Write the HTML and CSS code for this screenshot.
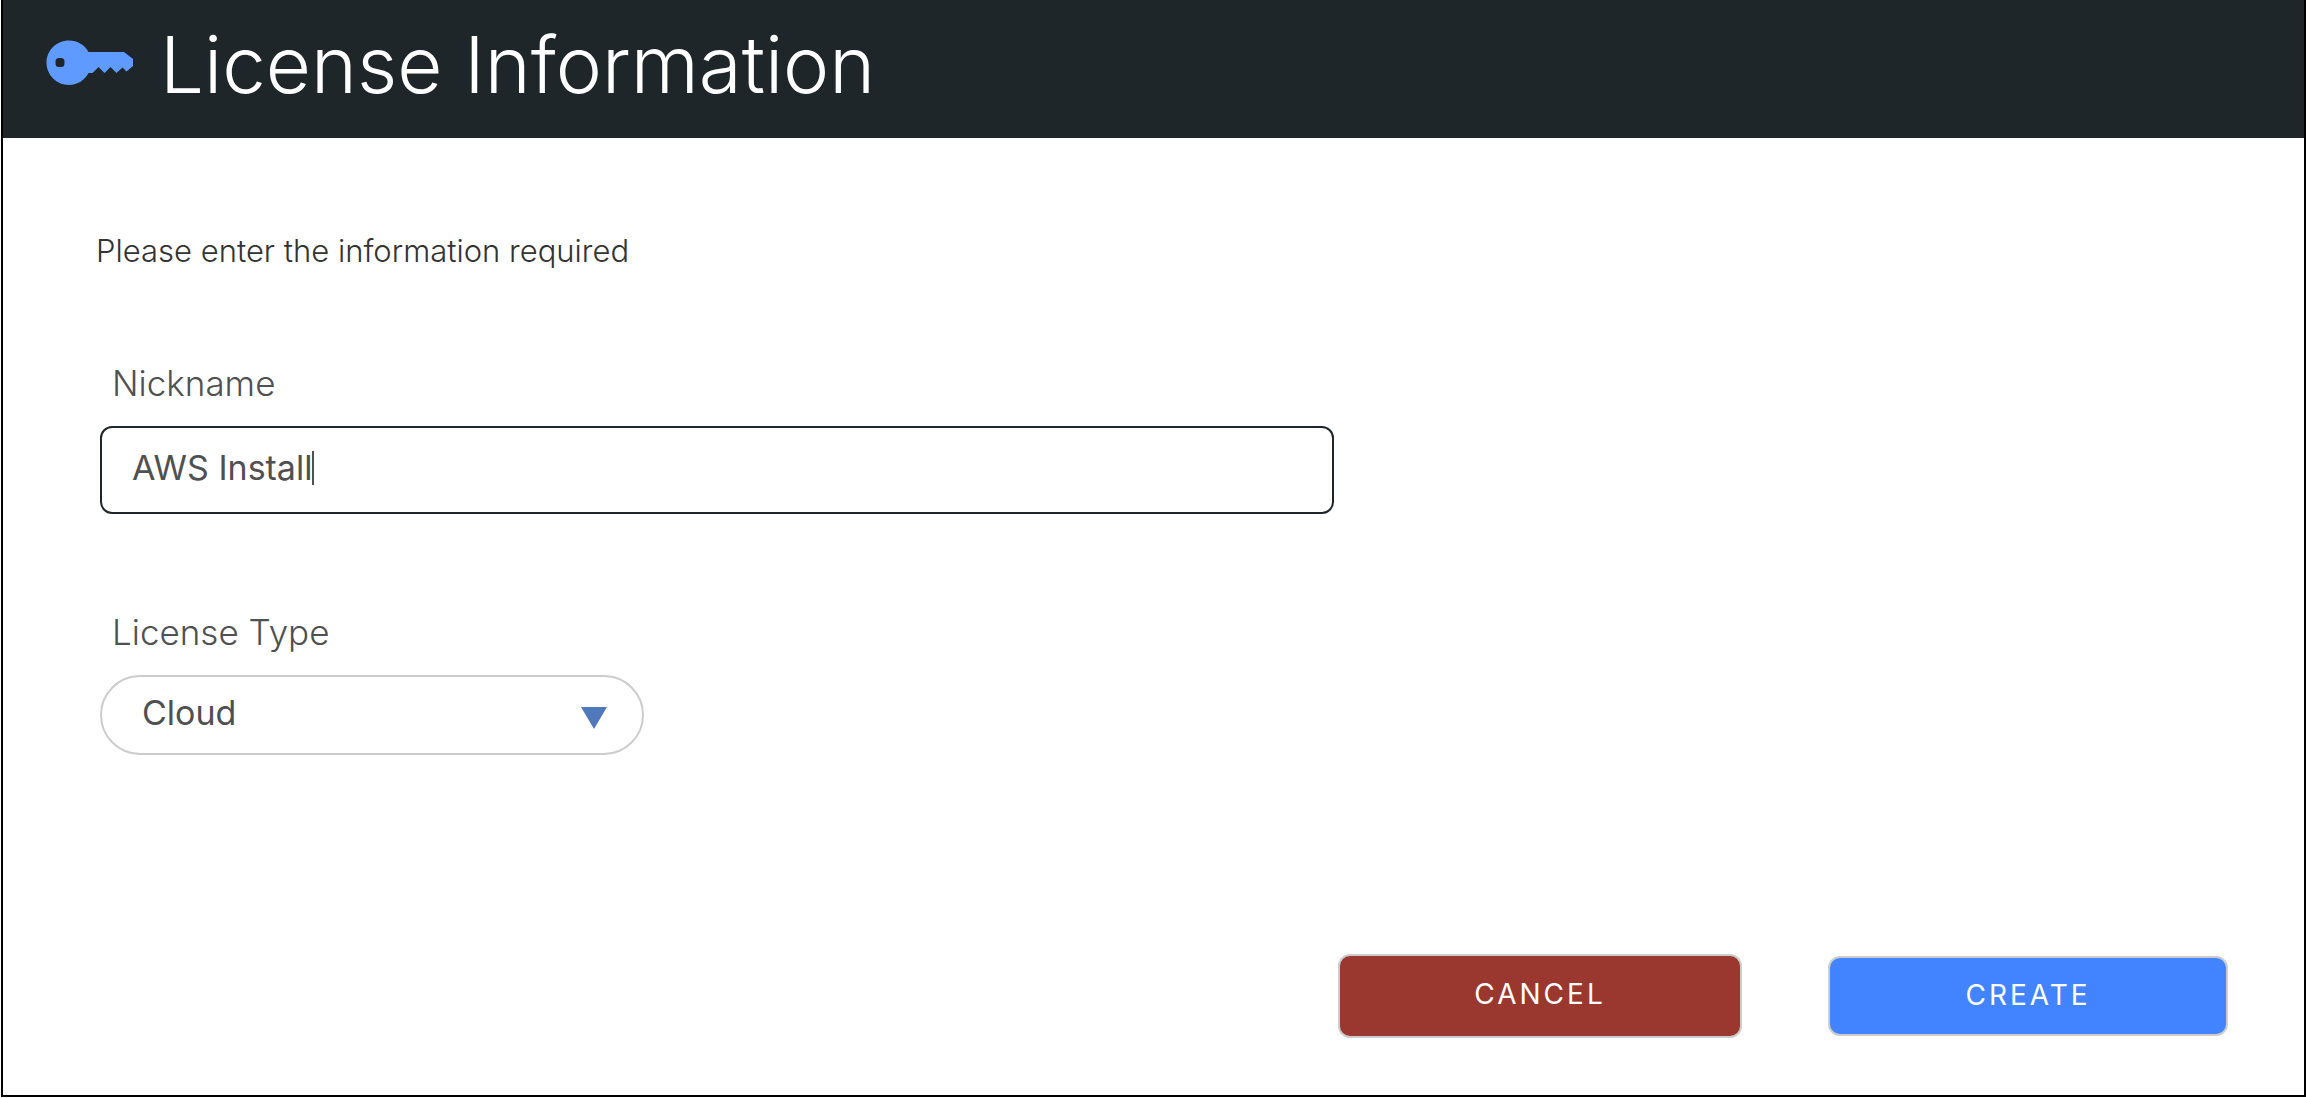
FILE: index.html
```html
<!DOCTYPE html>
<html lang="en">
<head>
<meta charset="utf-8">
<title>License Information</title>
<link rel="stylesheet" href="styles.css">
</head>
<body>
<main class="dialog">
  <header class="header">
    <svg class="key" viewBox="0 0 88 46" aria-hidden="true">
      <path fill-rule="evenodd" d="M23 0.500C31.500 0.500 39 5 42.500 12H78L87 19V26L80.500 31.500L76.500 27.500L70.500 33L64.500 27L58.500 33L52.500 27L46.500 33H42.500C39 40 31.500 45 23 45C10.500 45 0.500 35 0.500 22.800C0.500 10.500 10.500 0.500 23 0.500ZM13 18Q9.500 18 9.500 21.500V23.500Q9.500 27 13 27H15Q18.500 27 18.500 23.500V21.500Q18.500 18 15 18Z"/>
    </svg>
    <h1 class="title">License Information</h1>
  </header>
  <form class="form">
    <p class="intro">Please enter the information required</p>
    <div class="field">
      <label class="label" for="nickname">Nickname</label>
      <div class="textbox">
        <input class="input" id="nickname" type="text" value="AWS Install">
        <span class="caret"></span>
      </div>
    </div>
    <div class="field">
      <label class="label" for="type">License Type</label>
      <div class="picker">
        <select class="select" id="type">
          <option>Cloud</option>
        </select>
        <svg class="arrow" viewBox="0 0 26 22" aria-hidden="true"><path d="M0 0H26L13 22Z"/></svg>
      </div>
    </div>
    <div class="actions">
      <button class="button cancel" type="button">CANCEL</button>
      <button class="button create" type="button">CREATE</button>
    </div>
  </form>
</main>
</body>
</html>
```
FILE: styles.css
```css
* { box-sizing: border-box; }

body {
  margin: 0;
  background: #fff;
  font-family: Inter, "Liberation Sans", sans-serif;
  font-weight: 300;
}

.dialog {
  display: flex;
  flex-direction: column;
  min-height: calc(100vh - 1px);
  margin-left: 1px;
  border: 2px solid #000;
  border-top: 0;
}

.header {
  display: flex;
  align-items: center;
  gap: 26px;
  height: 138px;
  padding: 0 43px 8px;
  background: #1f262a;
}

.key { width: 88px; height: 46px; margin-bottom: 4px; fill: #5f9bff; }

.title {
  margin: 0;
  color: #fff;
  font-size: 78px;
  font-weight: 300;
  line-height: 96px;
}

.form {
  flex: 1;
  display: flex;
  flex-direction: column;
  padding: 93px 76px 57px 97px;
}

.intro {
  margin: 0 0 88px -4px;
  color: #333;
  font-size: 31px;
  line-height: 40px;
}

.field { margin: 0 0 94px; }

.label {
  display: block;
  margin: 0 0 19px 12px;
  color: #4f5051;
  font-size: 35px;
  line-height: 48px;
}

.textbox {
  display: flex;
  align-items: center;
  width: 58%;
  height: 88px;
  padding: 0 30px 4px;
  border: 2px solid #1f262a;
  border-radius: 12px;
}

.input {
  field-sizing: content;
  padding: 0;
  border: 0;
  outline: 0;
  background: none;
  color: #4f5051;
  font: 400 34px/44px Inter, sans-serif;
}

.caret { width: 2px; height: 34px; background: #4f5051; }

.picker { position: relative; width: 544px; max-width: 100%; }

.select {
  display: block;
  appearance: none;
  width: 100%;
  height: 80px;
  padding: 0 40px 4px;
  border: 2px solid #ccc;
  border-radius: 40px;
  background: #fff;
  color: #4f5051;
  font: 400 34px/44px Inter, sans-serif;
}

.arrow {
  position: absolute;
  top: 32px;
  right: 37px;
  width: 26px;
  height: 22px;
  fill: #5078bd;
  pointer-events: none;
}

.actions {
  display: flex;
  justify-content: flex-end;
  align-items: center;
  gap: 86px;
  margin-top: auto;
}

.button {
  width: 400px;
  height: 80px;
  padding: 0 0 2px;
  border: 2px solid #ccc;
  border-radius: 12px;
  color: #fff;
  font: 400 28px/36px Inter, sans-serif;
  letter-spacing: 3px;
}

.cancel { width: 404px; height: 84px; padding-bottom: 4px; background: #9a382f; }
.create { background: #4284ff; }
```
